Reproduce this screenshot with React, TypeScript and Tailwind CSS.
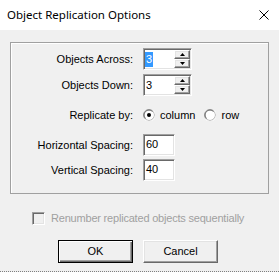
import React from "react";

const sunken =
  "border border-t-[#a0a0a0] border-l-[#a0a0a0] border-b-white border-r-white shadow-[inset_1px_1px_0_#696969,inset_-1px_-1px_0_#e3e3e3]";

const raised =
  "border border-t-white border-l-white border-b-[#696969] border-r-[#696969] shadow-[inset_-1px_-1px_0_#a0a0a0,inset_1px_1px_0_#e3e3e3]";

const Arrow: React.FC<{ up?: boolean }> = ({ up }) => (
  <svg width="5" height="3" viewBox="0 0 5 3">
    <polygon points={up ? "2.5,0 5,3 0,3" : "0,0 5,0 2.5,3"} fill="#000" />
  </svg>
);

const SpinBox: React.FC<{ value: string; selected?: boolean }> = ({ value, selected }) => (
  <div className={`w-[49px] h-[22px] bg-white flex ${sunken}`}>
    <div className="flex-1 pl-[1px] pt-[2px]">
      {selected ? (
        <span className="bg-[#3399ff] text-white inline-block h-[15px] leading-[15px] px-[1px]">{value}</span>
      ) : (
        <span className="inline-block h-[15px] leading-[15px] px-[1px]">{value}</span>
      )}
    </div>
    <div className="flex flex-col w-[17px] py-[1px] pr-[1px]">
      <div className={`flex-1 bg-[#f0f0f0] flex items-center justify-center ${raised}`}>
        <Arrow up />
      </div>
      <div className={`flex-1 bg-[#f0f0f0] flex items-center justify-center ${raised}`}>
        <Arrow />
      </div>
    </div>
  </div>
);

const TextBox: React.FC<{ value: string }> = ({ value }) => (
  <div className={`w-[32px] h-[22px] bg-white pl-[2px] pt-[2px] leading-[15px] ${sunken}`}>{value}</div>
);

const Radio: React.FC<{ checked?: boolean }> = ({ checked }) => (
  <svg width="12" height="12" viewBox="0 0 12 12">
    <circle cx="6" cy="6" r="5.5" fill="#fff" stroke="#a0a0a0" />
    <path d="M1.6 10.4 A5.5 5.5 0 0 0 10.4 1.6" fill="none" stroke="#fff" />
    <path d="M2.5 9.5 A4.5 4.5 0 0 1 9.5 2.5" fill="none" stroke="#696969" />
    {checked && <circle cx="6" cy="6" r="2" fill="#000" />}
  </svg>
);

const Row: React.FC<{ label: string; children: React.ReactNode; className?: string }> = ({
  label,
  children,
  className,
}) => (
  <div className={`flex items-center ${className ?? ""}`}>
    <div className="w-[122px] text-right">{label}</div>
    <div className="ml-[10px] flex items-center">{children}</div>
  </div>
);

export default function App() {
  return (
    <div
      className="w-[279px] h-[272px] bg-[#f0f0f0] flex flex-col text-[11px] text-black border-b border-dotted border-b-[#808080]"
      style={{ fontFamily: '"Liberation Sans", Arial, sans-serif' }}
    >
      <div className="h-[30px] bg-white flex items-center justify-between pl-[7px] pr-[10px] shrink-0">
        <span className="text-[11.5px] text-black" style={{ fontFamily: '"Noto Sans", "Open Sans", sans-serif' }}>
          Object Replication Options
        </span>
        <svg width="10" height="10" viewBox="0 0 10 10">
          <path d="M0.5 0.5 L9.5 9.5 M9.5 0.5 L0.5 9.5" stroke="#000" strokeWidth="1" />
        </svg>
      </div>

      <div className="px-[10px] pt-[12px]">
        <div className="h-[152px] border border-[#a0a0a0] shadow-[inset_1px_1px_0_#fff] pt-[5px]">
          <Row label="Objects Across:">
            <SpinBox value="3" selected />
          </Row>
          <Row label="Objects Down:" className="mt-[4px]">
            <SpinBox value="3" />
          </Row>
          <Row label="Replicate by:" className="mt-[11px] h-[16px]">
            <Radio checked />
            <span className="ml-[5px]">column</span>
            <span className="ml-[9px] flex items-center">
              <Radio />
            </span>
            <span className="ml-[5px]">row</span>
          </Row>
          <Row label="Horizontal Spacing:" className="mt-[11px]">
            <TextBox value="60" />
          </Row>
          <Row label="Vertical Spacing:" className="mt-[3px]">
            <TextBox value="40" />
          </Row>
        </div>
      </div>

      <div className="flex items-center pl-[32px] mt-[16px] text-[#a0a0a0]">
        <div className={`w-[13px] h-[13px] bg-[#f0f0f0] ${sunken}`} />
        <span className="ml-[6px] tracking-[-0.2px]">Renumber replicated objects sequentially</span>
      </div>

      <div className="flex pl-[58px] gap-[10px] mt-[13px]">
        <button className="w-[75px] h-[23px] bg-[#f0f0f0] border border-black shadow-[inset_1px_1px_0_#fff,inset_-1px_-1px_0_#696969,inset_-2px_-2px_0_#a0a0a0]">
          OK
        </button>
        <button className={`w-[75px] h-[23px] bg-[#f0f0f0] ${raised}`}>Cancel</button>
      </div>
    </div>
  );
}
